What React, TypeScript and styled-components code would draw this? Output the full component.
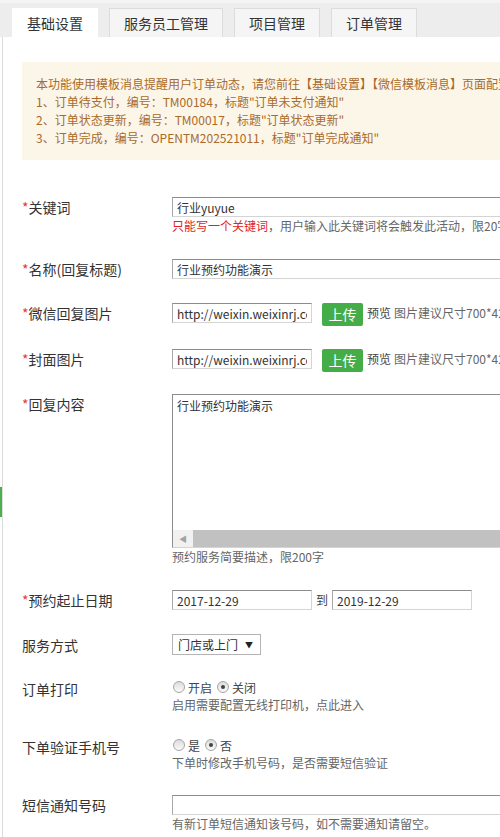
import React from "react";
import styled, { createGlobalStyle } from "styled-components";

const Global = createGlobalStyle`
  html, body {
    margin: 0;
    padding: 0;
    background: #fff;
  }
  body {
    font-family: "Microsoft YaHei", "Noto Sans CJK SC", sans-serif;
    color: #333;
  }
`;

const Page = styled.div`
  position: relative;
  width: 500px;
  min-height: 837px;
  overflow: hidden;
  display: flex;
  flex-direction: column;
`;

const SideMarker = styled.div`
  position: absolute;
  left: 0;
  top: 487px;
  width: 2px;
  height: 30px;
  background: #4cae4c;
`;

const TabBar = styled.div`
  display: flex;
  gap: 11px;
  padding: 5px 0 0 12px;
  height: 37px;
  box-sizing: border-box;
  background: #ededed;
  border-top: 3px solid #f4f4f4;
`;

const Tab = styled.div<{ $active?: boolean }>`
  height: 29px;
  box-sizing: border-box;
  padding: 0 14px;
  display: flex;
  align-items: center;
  font-size: 14px;
  color: #333;
  background: ${(p) => (p.$active ? "#fff" : "#f5f5f5")};
  border: 1px solid ${(p) => (p.$active ? "#fff" : "#dcdcdc")};
  border-bottom: none;
  white-space: nowrap;
`;

const Panel = styled.div`
  flex: 1;
  margin-left: 2px;
  border-left: 1px solid #dcdcdc;
  padding: 25px 0 0 19px;
  width: 800px;
`;

const Notice = styled.div`
  width: 700px;
  background: #fcf6e9;
  padding: 13px 14px;
  font-size: 12px;
  line-height: 18px;
  color: #a96a2a;
  white-space: nowrap;
`;

const Form = styled.div`
  display: flex;
  flex-direction: column;
`;

const Row = styled.div<{ $mt: number }>`
  display: grid;
  grid-template-columns: 150px 1fr;
  margin-top: ${(p) => p.$mt}px;
`;

const Label = styled.div<{ $offset?: number }>`
  font-size: 14px;
  line-height: 20px;
  color: #333;
  padding-top: ${(p) => p.$offset ?? 0}px;
  white-space: nowrap;
`;

const Star = styled.span`
  color: #e4393c;
`;

const Field = styled.div`
  display: flex;
  flex-direction: column;
`;

const Inline = styled.div`
  display: flex;
  align-items: flex-start;
  white-space: nowrap;
`;

const TextInput = styled.input<{ $w: number }>`
  width: ${(p) => p.$w}px;
  height: 20px;
  box-sizing: border-box;
  margin: 0;
  padding: 0 4px;
  border: 1px solid #d4d4d4;
  border-top-color: #8c8c8c;
  border-left-color: #a8a8a8;
  font-family: inherit;
  font-size: 12px;
  color: #333;
  background: #fff;
  outline: none;
`;

const Help = styled.div`
  font-size: 12px;
  line-height: 18px;
  color: #666;
  white-space: nowrap;
`;

const Warn = styled.span`
  color: #e02424;
`;

const UploadButton = styled.button`
  margin: 0 0 0 10px;
  width: 41px;
  height: 23px;
  padding: 0;
  border: none;
  border-radius: 2px;
  background: #44ad48;
  color: #fff;
  font-family: inherit;
  font-size: 14px;
  line-height: 23px;
`;

const SideText = styled.span<{ $dark?: boolean }>`
  font-size: 12px;
  line-height: 20px;
  color: ${(p) => (p.$dark ? "#444" : "#666")};
  margin-left: ${(p) => (p.$dark ? 4 : 3)}px;
`;

const TextBox = styled.div`
  width: 400px;
  box-sizing: border-box;
  border: 1px solid #d4d4d4;
  border-top-color: #8c8c8c;
  border-left-color: #8c8c8c;
  display: flex;
  flex-direction: column;
`;

const TextArea = styled.textarea`
  height: 135px;
  box-sizing: border-box;
  margin: 0;
  padding: 2px 4px;
  border: none;
  resize: none;
  overflow: hidden;
  font-family: inherit;
  font-size: 12px;
  line-height: 17px;
  color: #333;
  outline: none;
`;

const HScroll = styled.div`
  height: 17px;
  display: flex;
  background: #f1f1f1;
`;

const ScrollArrow = styled.div`
  width: 20px;
  display: flex;
  align-items: center;
  justify-content: center;
  color: #a3a3a3;
  font-size: 8px;
`;

const ScrollThumb = styled.div`
  flex: 1;
  background: #c1c1c1;
`;

const To = styled.span`
  font-size: 12px;
  line-height: 20px;
  color: #444;
  margin: 0 4px;
`;

const SelectBox = styled.div`
  width: 89px;
  height: 21px;
  box-sizing: border-box;
  border: 1px solid #b4b4b4;
  display: flex;
  align-items: center;
  justify-content: space-between;
  padding: 0 7px 0 5px;
  font-size: 12px;
  color: #333;
  background: #fff;
`;

const Caret = styled.span`
  font-size: 8px;
  color: #222;
`;

const RadioLine = styled.div`
  display: flex;
  align-items: center;
  height: 18px;
  font-size: 12px;
  color: #444;
`;

const Radio = styled.span<{ $checked?: boolean }>`
  position: relative;
  width: 12px;
  height: 12px;
  box-sizing: border-box;
  border-radius: 50%;
  border: 1px solid #a6a6a6;
  background: linear-gradient(#dcdcdc, #fafafa);
  margin: 0 3px 0 1px;
  &::after {
    content: "";
    display: ${(p) => (p.$checked ? "block" : "none")};
    position: absolute;
    left: 3px;
    top: 3px;
    width: 4px;
    height: 4px;
    border-radius: 50%;
    background: #444;
  }
`;

const RadioText = styled.span`
  margin-right: 4px;
`;

export default function App() {
  return (
    <>
      <Global />
      <Page>
        <SideMarker />
        <TabBar>
          <Tab $active>基础设置</Tab>
          <Tab>服务员工管理</Tab>
          <Tab>项目管理</Tab>
          <Tab>订单管理</Tab>
        </TabBar>
        <Panel>
          <Notice>
            <div>本功能使用模板消息提醒用户订单动态，请您前往【基础设置】【微信模板消息】页面配置以下模板消息</div>
            <div>1、订单待支付，编号：TM00184，标题"订单未支付通知"</div>
            <div>2、订单状态更新，编号：TM00017，标题"订单状态更新"</div>
            <div>3、订单完成，编号：OPENTM202521011，标题"订单完成通知"</div>
          </Notice>
          <Form>
            <Row $mt={37}>
              <Label><Star>*</Star>关键词</Label>
              <Field>
                <TextInput $w={400} defaultValue="行业yuyue" readOnly />
                <Help>
                  <Warn>只能写一个关键词</Warn>，用户输入此关键词将会触发此活动，限20字
                </Help>
              </Field>
            </Row>
            <Row $mt={24}>
              <Label><Star>*</Star>名称(回复标题)</Label>
              <Field>
                <TextInput $w={400} defaultValue="行业预约功能演示" readOnly />
              </Field>
            </Row>
            <Row $mt={24}>
              <Label><Star>*</Star>微信回复图片</Label>
              <Inline>
                <TextInput $w={140} defaultValue="http://weixin.weixinrj.com/upload/img.jpg" readOnly />
                <UploadButton>上传</UploadButton>
                <SideText $dark>预览</SideText>
                <SideText>图片建议尺寸700*420</SideText>
              </Inline>
            </Row>
            <Row $mt={23}>
              <Label><Star>*</Star>封面图片</Label>
              <Inline>
                <TextInput $w={140} defaultValue="http://weixin.weixinrj.com/upload/img.jpg" readOnly />
                <UploadButton>上传</UploadButton>
                <SideText $dark>预览</SideText>
                <SideText>图片建议尺寸700*420</SideText>
              </Inline>
            </Row>
            <Row $mt={22}>
              <Label><Star>*</Star>回复内容</Label>
              <Field>
                <TextBox>
                  <TextArea defaultValue="行业预约功能演示" readOnly />
                  <HScroll>
                    <ScrollArrow>◀</ScrollArrow>
                    <ScrollThumb />
                  </HScroll>
                </TextBox>
                <Help>预约服务简要描述，限200字</Help>
              </Field>
            </Row>
            <Row $mt={24}>
              <Label><Star>*</Star>预约起止日期</Label>
              <Inline>
                <TextInput $w={140} defaultValue="2017-12-29" readOnly />
                <To>到</To>
                <TextInput $w={140} defaultValue="2019-12-29" readOnly />
              </Inline>
            </Row>
            <Row $mt={24}>
              <Label $offset={1}>服务方式</Label>
              <Inline>
                <SelectBox>
                  <span>门店或上门</span>
                  <Caret>▼</Caret>
                </SelectBox>
              </Inline>
            </Row>
            <Row $mt={23}>
              <Label $offset={1}>订单打印</Label>
              <Field>
                <RadioLine>
                  <Radio />
                  <RadioText>开启</RadioText>
                  <Radio $checked />
                  <RadioText>关闭</RadioText>
                </RadioLine>
                <Help>启用需要配置无线打印机，点此进入</Help>
              </Field>
            </Row>
            <Row $mt={22}>
              <Label $offset={1}>下单验证手机号</Label>
              <Field>
                <RadioLine>
                  <Radio />
                  <RadioText>是</RadioText>
                  <Radio $checked />
                  <RadioText>否</RadioText>
                </RadioLine>
                <Help>下单时修改手机号码，是否需要短信验证</Help>
              </Field>
            </Row>
            <Row $mt={23}>
              <Label>短信通知号码</Label>
              <Field>
                <TextInput $w={400} defaultValue="" readOnly />
                <Help>有新订单短信通知该号码，如不需要通知请留空。</Help>
              </Field>
            </Row>
          </Form>
        </Panel>
      </Page>
    </>
  );
}
